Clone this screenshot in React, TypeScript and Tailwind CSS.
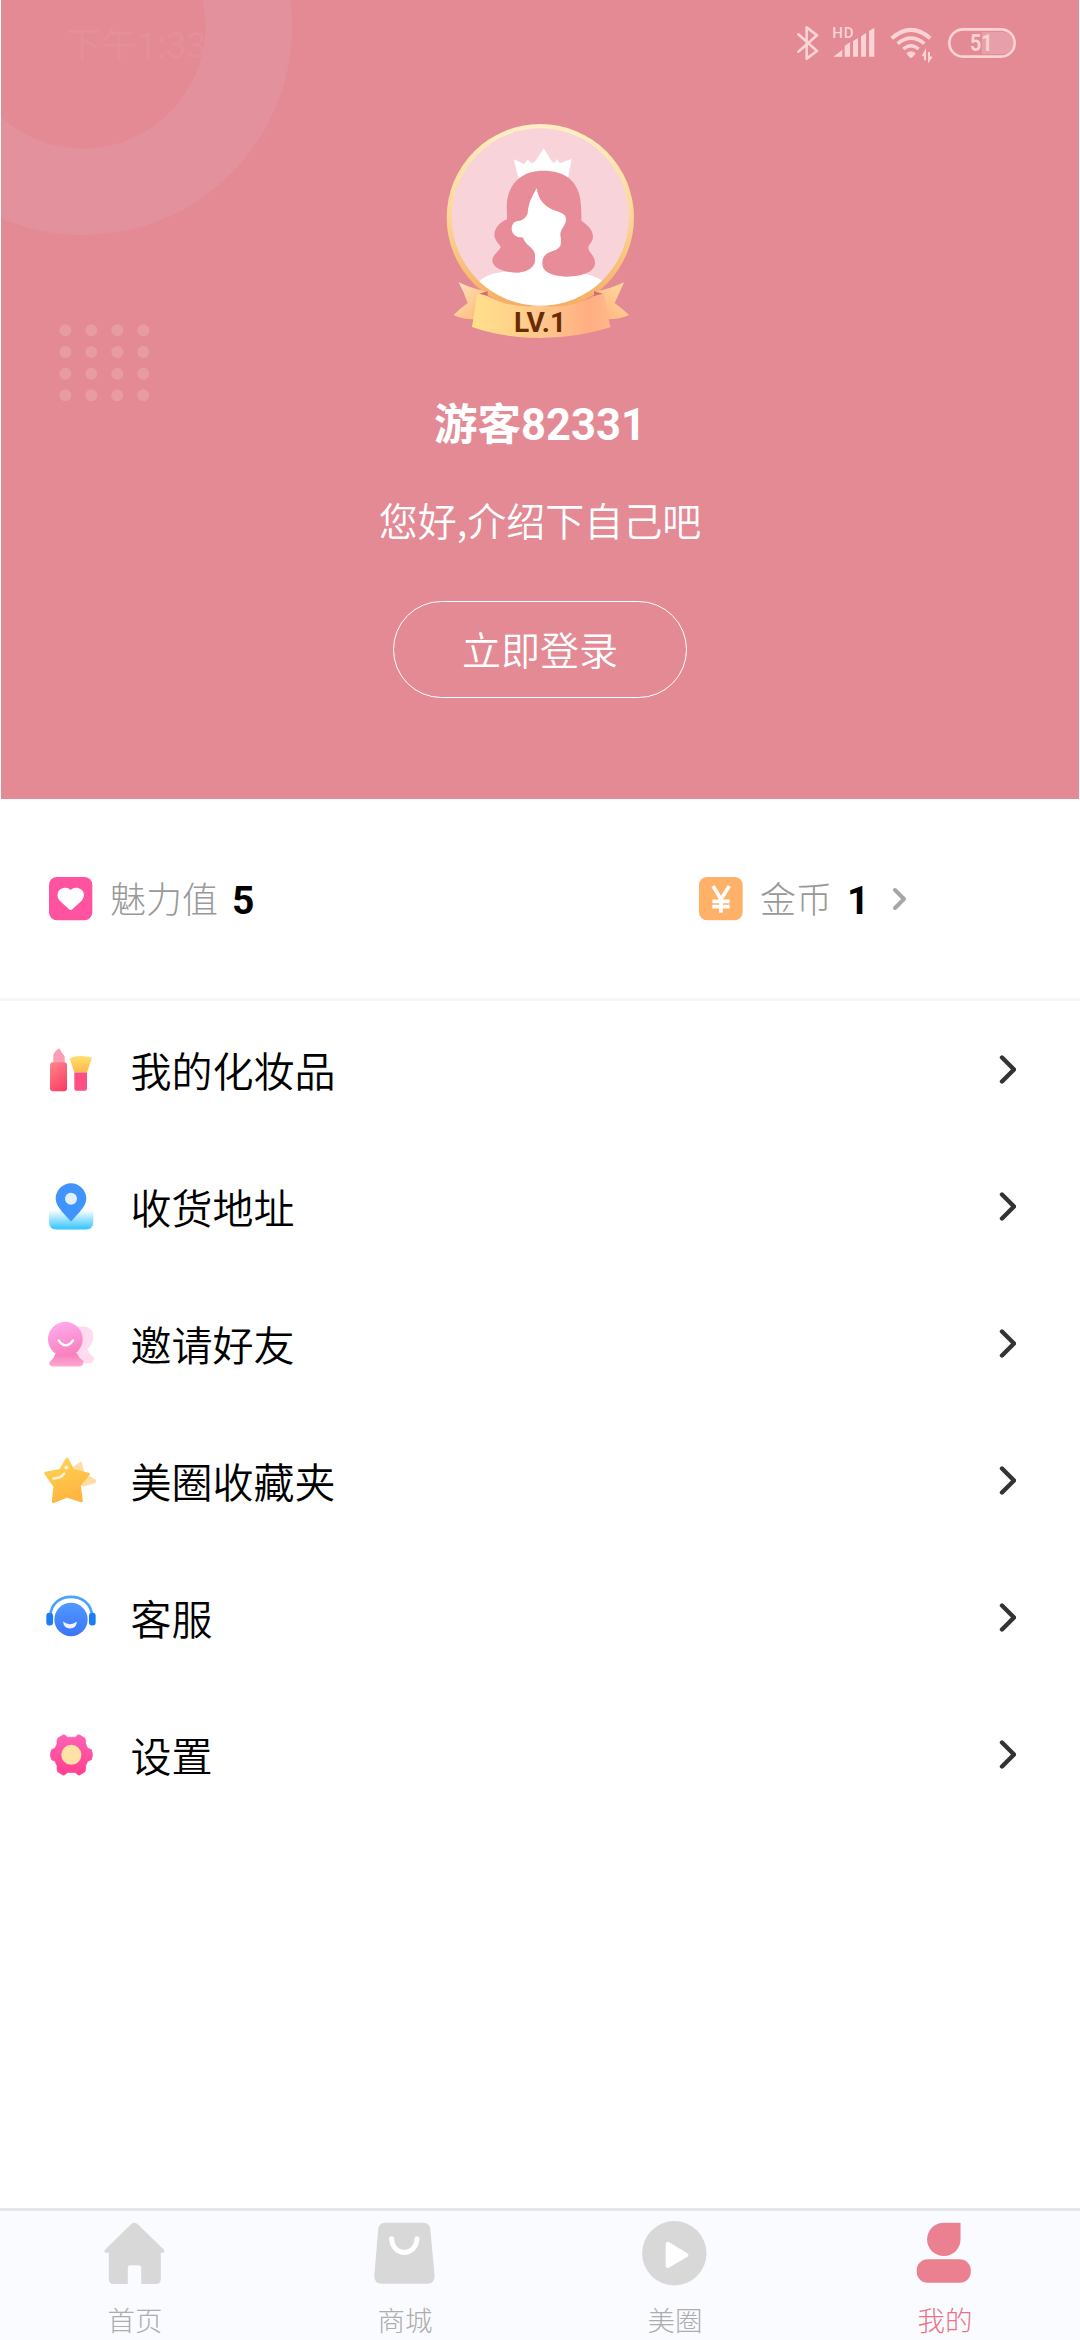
import React from 'react';

const FONTE = 'font-[Roboto,"Noto_Sans_CJK_SC",sans-serif]';

/* ---------- status bar ---------- */

const StatusIcons: React.FC = () => (
  <svg width="260" height="70" viewBox="0 0 780 210" fill="none" className="text-[#fbd3d4]">
    {/* bluetooth */}
    <path d="M55 73 L111 123 L80 146 V52 L111 76 L55 125" stroke="currentColor" strokeWidth="8" strokeLinejoin="round" strokeLinecap="round" />
    {/* signal */}
    <text x="157" y="84" fontSize="45" fontWeight="500" letterSpacing="2" fill="currentColor" className="font-[Roboto,sans-serif]">
      HD
    </text>
    <path d="M160 140 L187 119 V140 Z M194 140 V107 L210 97 V140 Z M219 140 V93 L234 84 V140 Z M243 140 V79 L258 69 V140 Z M267 140 V63 L283 53 V140 Z" fill="currentColor" />
    {/* wifi */}
    <path d="M335 85 Q393 34 451 85" stroke="currentColor" strokeWidth="12" />
    <path d="M353 101 Q393 68 433 101" stroke="currentColor" strokeWidth="11" />
    <path d="M370 117 Q393 97 416 117" stroke="currentColor" strokeWidth="10" />
    <path d="M379 130 Q393 117 407 130 Q402 140 393 145 Q384 140 379 130 Z" fill="currentColor" />
    <path d="M435 151 V126 L428 138 M447 126 V151 L455 140" stroke="currentColor" strokeWidth="6" />
    {/* battery */}
    <path d="M606 66 H667 A33 33 0 0 1 667 132 H606 Z" fill="#e7a0aa" />
    <rect x="508" y="58" width="196" height="82" rx="41" stroke="currentColor" strokeWidth="8" />
    <text x="604" y="124" fontSize="70" fontWeight="700" textAnchor="middle" textLength="68" lengthAdjust="spacingAndGlyphs" fill="currentColor" className="font-[Roboto,sans-serif]">
      51
    </text>
  </svg>
);

/* ---------- header ---------- */

const colunas = [65.3, 91.3, 117.3, 143.3];
const linhas = [330.3, 352, 373.7, 395.3];

const HeaderDecor: React.FC = () => (
  <svg className="absolute left-0 top-0" width="320" height="420" viewBox="1 0 320 420" fill="none">
    <circle cx="83" cy="26" r="165.8" stroke="#e4919e" strokeWidth="86.5" />
    {linhas.map(y => colunas.map(x => <circle key={`${x}-${y}`} cx={x} cy={y} r="6" fill="#e99ba4" />))}
  </svg>
);

const Avatar: React.FC = () => (
  <div className="relative h-[260px] w-[240px]">
    <svg width="240" height="260" viewBox="0 0 720 780">
      <defs>
        <linearGradient id="aro" x1="0" y1="0" x2="0" y2="1">
          <stop offset="0" stopColor="#fff0c4" />
          <stop offset="0.5" stopColor="#fbd795" />
          <stop offset="1" stopColor="#f5ab60" />
        </linearGradient>
        <linearGradient id="faixa" gradientUnits="userSpaceOnUse" x1="156" y1="640" x2="571" y2="640">
          <stop offset="0" stopColor="#ffe18b" />
          <stop offset="0.5" stopColor="#ffc78c" />
          <stop offset="0.85" stopColor="#ffae82" />
          <stop offset="1" stopColor="#ffb887" />
        </linearGradient>
        <linearGradient id="pontaE" x1="0" y1="0" x2="1" y2="1">
          <stop offset="0" stopColor="#ffe6c4" />
          <stop offset="1" stopColor="#fdb368" />
        </linearGradient>
        <linearGradient id="pontaD" x1="1" y1="0" x2="0" y2="1">
          <stop offset="0" stopColor="#ffdf9e" />
          <stop offset="1" stopColor="#ffae7e" />
        </linearGradient>
        <clipPath id="recorte">
          <circle cx="361" cy="351" r="266" />
        </clipPath>
      </defs>
      <circle cx="361" cy="353" r="281" fill="url(#aro)" />
      <circle cx="361" cy="351" r="266" fill="#f8d3da" />
      <g clipPath="url(#recorte)">
        <path d="M165 555 C195 522 230 514 290 514 L345 490 V430 H366 V490 L430 520 C490 514 525 525 565 555 V640 H165 Z" fill="#fff" />
        <path d="M281 178 L313 192 L323 178 L334 190 Q342 190 348 180 L371 145 L394 182 Q399 190 404 188 L411 177 L419 190 L455 177 L441 250 H299 Z" fill="#fff" />
        <path d="M370 212 C300 212 262 256 260 318 L261 358 C240 366 223 385 223 405 C223 422 240 432 242 442 C237 456 217 463 217 482 C219 505 255 518 295 518 C325 515 345 500 345 480 V440 H366 V490 C366 514 395 530 440 530 C488 530 525 515 525 490 C526 467 504 456 505 443 C507 432 519 427 519 409 C518 386 500 374 484 362 C485 300 480 265 450 237 C430 219 400 212 370 212 Z" fill="#e88c99" />
        <path d="M350 264 C339 285 324 310 323 340 C318 354 306 363 294 363 C283 363 275 374 275 386 C275 401 288 412 302 412 C308 411 310 414 312 420 C321 438 343 444 345 464 V520 H367 V490 C365 465 388 455 407 450 C424 441 425 431 421 405 C421 385 439 375 438 357 C437 340 419 337 400 330 C370 316 355 298 350 264 Z" fill="#fff" />
      </g>
      {/* ribbon */}
      <path d="M116 547 Q155 566 206 576 L192 600 L165 658 Q128 659 101 645 Q122 624 143 609 Q132 576 116 547 Z" fill="url(#pontaE)" />
      <path d="M612 547 Q572 567 520 576 L536 600 L565 658 Q600 658 627 645 Q605 624 584 609 Q598 580 612 547 Z" fill="url(#pontaD)" />
      <path d="M172 582 L190 581 A266 266 0 0 0 361 617 A266 266 0 0 0 535 581 L551 582 L571 682 Q470 714 361 714 Q250 714 156 681 Z" fill="url(#faixa)" />
      <path d="M178 581 L203 573 V588 Z M548 581 L522 573 V588 Z" fill="#cf7078" />
    </svg>
    <span className="absolute left-0 top-[206px] w-full text-center text-[28px] font-bold leading-[34px] text-[#6a2b02]">LV.1</span>
  </div>
);

/* ---------- list icons ---------- */

const CosmeticIcon = () => (
  <svg width="60" height="56" viewBox="60 64.5 180 168">
    <defs>
      <linearGradient id="batom" x1="0.3" y1="0" x2="0.8" y2="1">
        <stop offset="0" stopColor="#ff7f86" />
        <stop offset="1" stopColor="#fd3d63" />
      </linearGradient>
      <linearGradient id="pincel" x1="0" y1="0" x2="0" y2="1">
        <stop offset="0" stopColor="#ffe06b" />
        <stop offset="1" stopColor="#ffb74d" />
      </linearGradient>
    </defs>
    <path d="M100 130 V105 Q101 94 118 83 Q124 96 134 107 V130 Z" fill="#fb9db4" />
    <rect x="90" y="125" width="51" height="87" rx="9" fill="url(#batom)" />
    <path d="M149 113 Q183 100 216 112 L201 156 H163 Z" fill="url(#pincel)" />
    <path d="M163 156 H201 V203 Q201 211 192 211 H172 Q163 211 163 203 Z" fill="#fd4f83" />
  </svg>
);

const AddressIcon = () => (
  <svg width="60" height="56" viewBox="60 475.5 180 168">
    <defs>
      <linearGradient id="agua" x1="0" y1="0" x2="0" y2="1">
        <stop offset="0" stopColor="#fff" />
        <stop offset="1" stopColor="#2fc4ff" />
      </linearGradient>
    </defs>
    <path d="M87 568 H220 V604 Q220 627 197 627 H110 Q87 627 87 604 Z" fill="url(#agua)" />
    <path d="M153 488 C178 488 199 509 199 534 C199 557 178 575 153 603 C128 575 107 557 107 534 C107 509 128 488 153 488 Z" fill="#3f95fd" />
    <circle cx="153" cy="535" r="18" fill="#e4effd" />
  </svg>
);

const InviteIcon = () => (
  <svg width="60" height="56" viewBox="60 886.5 180 168">
    <defs>
      <linearGradient id="amigo" x1="0.3" y1="0" x2="0.6" y2="1">
        <stop offset="0" stopColor="#ffabf0" />
        <stop offset="1" stopColor="#f87fb9" />
      </linearGradient>
      <linearGradient id="ombro" x1="0" y1="0" x2="0" y2="1">
        <stop offset="0" stopColor="#f77db8" />
        <stop offset="1" stopColor="#ffa9d2" />
      </linearGradient>
    </defs>
    <path d="M165 918 H193 Q220 922 220 948 Q220 970 202 986 Q206 998 222 1011 Q223 1028 210 1028 H170 Z" fill="#fedbef" />
    <path d="M107 998 H171 Q176 1012 190 1021 Q191 1038 178 1038 H99 Q87 1038 88 1026 Q102 1014 107 998 Z" fill="url(#ombro)" />
    <circle cx="136" cy="956" r="52" fill="url(#amigo)" />
    <path d="M116 960 Q137 989 159 960" fill="none" stroke="#fff" strokeWidth="7" strokeLinecap="round" />
  </svg>
);

const StarIcon = () => (
  <svg width="60" height="56" viewBox="60 67.5 180 168">
    <defs>
      <linearGradient id="estrela" x1="0" y1="0" x2="0.3" y2="1">
        <stop offset="0" stopColor="#ffd357" />
        <stop offset="1" stopColor="#ffb640" />
      </linearGradient>
    </defs>
    <path d="M184 92 L194 128 L226 147 Q232 153 225 158 L190 168 L150 150 L160 108 Z" fill="#ffdda2" />
    <path d="M141 86 L159 120 L205 131 L178 164 L184 211 L141 197 L100 213 L105 168 L77 128 L121 120 Z" fill="url(#estrela)" stroke="url(#estrela)" strokeWidth="9" strokeLinejoin="round" />
    <path d="M100 144 Q123 143 133 129" fill="none" stroke="#fff4d9" strokeWidth="7" strokeLinecap="round" />
    <circle cx="139" cy="111" r="6" fill="#fff0cc" />
  </svg>
);

const ServiceIcon = () => (
  <svg width="60" height="56" viewBox="60 478.5 180 168">
    <defs>
      <linearGradient id="rosto" x1="0" y1="0" x2="0" y2="1">
        <stop offset="0" stopColor="#5199ff" />
        <stop offset="1" stopColor="#3b75fb" />
      </linearGradient>
    </defs>
    <path d="M91 556 C94 480 212 480 216 556" fill="none" stroke="#4aa3ff" strokeWidth="8" />
    <rect x="79" y="547" width="20" height="38" rx="9" fill="#1b7cf5" />
    <rect x="207" y="547" width="20" height="38" rx="9" fill="#1b7cf5" />
    <circle cx="153" cy="567" r="50" fill="url(#rosto)" />
    <path d="M129 573 Q150 589 171 573 Q168 594 150 594 Q132 594 129 573 Z" fill="#f1f5ff" />
  </svg>
);

const SettingsIcon = () => (
  <svg width="60" height="56" viewBox="60 889.5 180 168">
    <defs>
      <linearGradient id="engrenagem" x1="0" y1="0" x2="0" y2="1">
        <stop offset="0" stopColor="#fd62b4" />
        <stop offset="1" stopColor="#ff408f" />
      </linearGradient>
    </defs>
    <path
      d="M130 913 Q135 912 142 920 H166 Q173 912 178 913 L195 923 Q198 929 197 940 L203 953 L214 957 Q221 973 214 988 L203 992 L197 1006 Q198 1017 195 1024 L178 1034 Q173 1034 166 1026 H142 Q135 1034 130 1034 L113 1024 Q110 1017 111 1006 L105 992 L95 988 Q87 973 95 957 L105 953 L111 940 Q110 929 113 923 Z"
      fill="url(#engrenagem)"
      stroke="url(#engrenagem)"
      strokeWidth="2"
      strokeLinejoin="round"
    />
    <circle cx="154" cy="973" r="30" fill="#ffe3a5" />
  </svg>
);

const menu = [
  { nome: '我的化妆品', Icone: CosmeticIcon },
  { nome: '收货地址', Icone: AddressIcon },
  { nome: '邀请好友', Icone: InviteIcon },
  { nome: '美圈收藏夹', Icone: StarIcon },
  { nome: '客服', Icone: ServiceIcon },
  { nome: '设置', Icone: SettingsIcon },
];

/* ---------- bottom tabs ---------- */

const HomeIcon = () => (
  <path
    d="M32 7.2 Q35.3 4.3 38.7 7.2 L65 32.8 Q66.3 34.8 64.6 35.8 H61.8 V62 Q61.8 67 56.8 67 H42.2 V51 Q42.2 48.3 39.5 48.3 H31.5 Q28.8 48.3 28.8 51 V67 H14.8 Q9.8 67 9.8 62 V35.8 H6.6 Q4.4 34.8 6 32.8 Z"
    fill="#d8d8d8"
  />
);

const BagIcon = () => (
  <>
    <path d="M16 5.7 H54.5 Q60.8 5.7 61.3 12.5 L65.6 58.5 Q65.8 66.7 58 66.7 H13 Q5 66.7 5.3 58.5 L9.2 12.5 Q9.8 5.7 16 5.7 Z" fill="#d8d8d8" />
    <path d="M22.6 21.7 C23.5 40 47 40 48 21.7" fill="none" stroke="#fff" strokeWidth="5" strokeLinecap="round" />
  </>
);

const PlayIcon = () => (
  <>
    <circle cx="35.3" cy="36.3" r="32.2" fill="#d8d8d8" />
    <path d="M28.7 26.7 L47.4 38 L28.7 49 Z" fill="#fff" stroke="#fff" strokeWidth="4" strokeLinejoin="round" />
  </>
);

const UserIcon = () => (
  <>
    <path d="M34.8 5.7 H51.5 V22.4 A16.7 16.7 0 1 1 34.8 5.7 Z" fill="#ea8090" />
    <rect x="7.7" y="42.3" width="54.1" height="23.4" rx="11" fill="#ea8090" />
  </>
);

const abas = [
  { nome: '首页', Icone: HomeIcon, ativa: false },
  { nome: '商城', Icone: BagIcon, ativa: false },
  { nome: '美圈', Icone: PlayIcon, ativa: false },
  { nome: '我的', Icone: UserIcon, ativa: true },
];

export default function App() {
  return (
    <div className={`flex h-[2340px] w-[1080px] flex-col overflow-hidden bg-white ${FONTE}`}>
      {/* HEADER */}
      <header className="relative mx-px flex h-[799px] flex-col items-center bg-[#e38a95]">
        <HeaderDecor />
        <div className="relative flex h-20 w-full items-start justify-between">
          <span className="ml-[64px] mt-[25px] text-[36px] leading-[42px] text-[#e58f9a]">下午1:33</span>
          <div className="mr-[39px] mt-[10px]">
            <StatusIcons />
          </div>
        </div>
        <div className="mt-5">
          <Avatar />
        </div>
        <h1 className="mt-[36px] text-[43.5px] font-bold leading-[60px] text-white">游客82331</h1>
        <p className="mt-[33px] font-['Noto_Sans_CJK_SC',sans-serif] text-[39px] font-[350] leading-[60px] text-white">您好,介绍下自己吧</p>
        <button className="mt-[52px] h-[97px] w-[294px] rounded-full border border-white pt-[5px] text-[39px] font-[350] leading-none text-white">
          立即登录
        </button>
      </header>

      {/* STATS */}
      <section className="flex h-[202px] items-center border-b-[3px] border-[#f6f6f6] pl-[49px]">
        <div className="flex w-[650px] items-center">
          <svg width="44" height="44" viewBox="0 0 132 132">
            <rect width="130" height="130" rx="24" fill="#ff529f" />
            <path d="M65 39 C74 30 87 31 96 37 C108 46 107 62 97 72 L70 97 Q65 102 60 97 L33 72 C23 62 23 46 34 37 C43 31 56 30 65 39 Z" fill="#fff" />
          </svg>
          <span className="ml-[17px] pt-[4px] text-[36px] font-light leading-[44px] text-[#999]">魅力值</span>
          <span className="ml-[14px] pt-[4px] text-[39px] font-bold leading-[44px] text-black">5</span>
        </div>
        <div className="flex items-center">
          <svg width="44" height="44" viewBox="0 0 132 132" fill="none">
            <rect width="131" height="130" rx="24" fill="#ffb168" />
            <path d="M42 27 L66 67 L91 27 M66 64 V107 M40 73 H92 M40 89 H92" stroke="#fff" strokeWidth="11" />
          </svg>
          <span className="ml-[17px] pt-[4px] text-[36px] font-light leading-[44px] text-[#999]">金币</span>
          <span className="ml-[15px] pt-[4px] text-[39px] font-bold leading-[44px] text-black">1</span>
          <svg className="ml-[23px]" width="16" height="26" viewBox="0 0 16 26" fill="none">
            <path d="M3 4 L12 13 L3 22" stroke="#a6a6a6" strokeWidth="4" strokeLinecap="round" strokeLinejoin="round" />
          </svg>
        </div>
      </section>

      {/* MENU */}
      <ul className="flex-1">
        {menu.map(({ nome, Icone }) => (
          <li key={nome} className="flex h-[137px] items-center pl-10 pr-16">
            <Icone />
            <span className="ml-[30.5px] flex-1 pt-[6px] text-[41px] font-[350] leading-[60px] text-black">{nome}</span>
            <svg width="18" height="32" viewBox="0 0 18 32" fill="none">
              <path d="M4 3.5 L16 15.5 L4 27.5" stroke="#333" strokeWidth="4.4" strokeLinecap="round" strokeLinejoin="round" />
            </svg>
          </li>
        ))}
      </ul>

      {/* TABS */}
      <nav className="grid h-[132px] grid-cols-4 border-t-[3px] border-[#e5e6e8] bg-[#fafbff]">
        {abas.map(({ nome, Icone, ativa }) => (
          <div key={nome} className="flex flex-col items-center pt-[6px]">
            <svg width="72" height="72" viewBox="0 0 72 72">
              <Icone />
            </svg>
            <span className={`mt-[13px] text-[27.5px] font-light leading-[39px] ${ativa ? 'text-[#e87486]' : 'text-[#adadad]'}`}>{nome}</span>
          </div>
        ))}
      </nav>
    </div>
  );
}
